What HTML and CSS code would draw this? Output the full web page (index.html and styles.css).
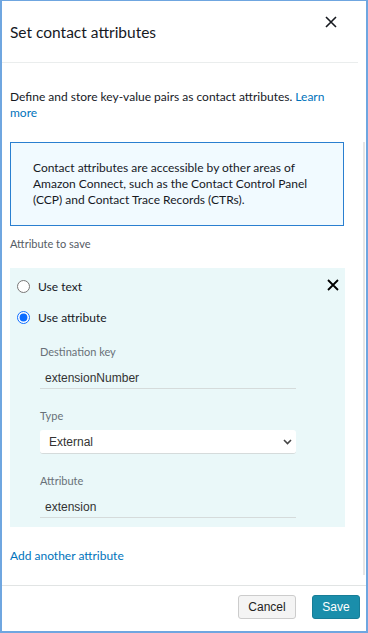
FILE: index.html
```html
<!DOCTYPE html>
<html lang="en">
<head>
    <meta charset="UTF-8" />
    <title>Set contact attributes</title>
    <link rel="stylesheet" href="styles.css">
</head>
<body>
<div class="frame">
    <div class="header">
        <h1>Set contact attributes</h1>
        <button class="close" type="button" aria-label="Close">
            <svg width="12" height="12" viewBox="0 0 12 12"><path d="M1 1 L11 11 M11 1 L1 11" stroke="#16191f" stroke-width="1.6"/></svg>
        </button>
    </div>

    <div class="body">
        <div class="content">
            <p class="intro">Define and store key-value pairs as contact attributes. <a href="#">Learn more</a></p>

            <div class="info">
                Contact attributes are accessible by other areas of Amazon Connect, such as the Contact Control Panel (CCP) and Contact Trace Records (CTRs).
            </div>

            <div class="section-label">Attribute to save</div>

            <div class="panel">
                <div class="radios">
                    <label class="radio"><input type="radio" name="mode"> Use text</label>
                    <label class="radio"><input type="radio" name="mode" checked> Use attribute</label>
                </div>
                <button class="remove" type="button" aria-label="Remove">
                    <svg width="12" height="12" viewBox="0 0 12 12"><path d="M1 1 L11 11 M11 1 L1 11" stroke="#000" stroke-width="1.8"/></svg>
                </button>

                <div class="fields">
                    <div class="field">
                        <label>Destination key</label>
                        <div class="value">extensionNumber</div>
                    </div>
                    <div class="field field-select">
                        <label>Type</label>
                        <div class="select">
                            <span>External</span>
                            <svg width="9" height="6" viewBox="0 0 9 6"><path d="M1 1 L4.5 4.5 L8 1" stroke="#444" stroke-width="1.6" fill="none"/></svg>
                        </div>
                    </div>
                    <div class="field">
                        <label>Attribute</label>
                        <div class="value">extension</div>
                    </div>
                </div>
            </div>

            <a class="add" href="#">Add another attribute</a>
        </div>
        <div class="scrollbar"></div>
    </div>

    <div class="footer">
        <button class="btn cancel" type="button">Cancel</button>
        <button class="btn save" type="button">Save</button>
    </div>
</div>
</body>
</html>
```

FILE: styles.css
```css
* {
    box-sizing: border-box;
}
body {
    margin: 0;
    font-family: Lato, 'Open Sans', sans-serif;
    color: #16191f;
    background: #fff;
}
.frame {
    width: 368px;
    height: 633px;
    border: 2px solid #6fa6e0;
    border-top-width: 1px;
    display: flex;
    flex-direction: column;
    background: #fff;
}
.header {
    display: flex;
    align-items: flex-start;
    justify-content: space-between;
    padding: 21px 21px 0 8px;
    height: 62px;
    margin-right: 8px;
    border-bottom: 1px solid #eaeded;
}
h1 {
    margin: 0;
    font-size: 15.5px;
    line-height: 20px;
    font-weight: 400;
}
.close, .remove {
    background: none;
    border: none;
    padding: 0;
    cursor: pointer;
    line-height: 0;
}
.close {
    margin-top: -6px;
}
.body {
    flex: 1;
    display: flex;
    min-height: 0;
}
.content {
    flex: 1;
    padding: 26px 0 0 8px;
}
.scrollbar {
    width: 2px;
    margin: 79px 1px 10px 0;
    background: #e6e6e6;
}
.intro {
    margin: 0;
    font-size: 12px;
    line-height: 16px;
    padding-right: 14px;
}
a {
    color: #0073bb;
    text-decoration: none;
}
.info {
    margin: 21px 19px 0 0;
    border: 1px solid #2a7fd0;
    background: #f1faff;
    font-size: 12px;
    line-height: 16px;
    padding: 17px 20px 16px 22px;
    height: 84px;
}
.section-label {
    margin-top: 11px;
    font-size: 11px;
    color: #545b64;
}
.panel {
    position: relative;
    margin: 18px 18px 0 0;
    background: #eaf8f9;
    padding: 9px 0 9px 6px;
}
.radios {
    display: flex;
    flex-direction: column;
    gap: 12px;
}
.radio {
    display: flex;
    align-items: center;
    font-size: 12px;
    height: 19px;
}
.radio input {
    margin: 0 8px 0 1px;
    width: 13px;
    height: 13px;
    accent-color: #0a6cff;
}
.remove {
    position: absolute;
    top: 11px;
    right: 6px;
}
.fields {
    padding: 18px 0 0 24px;
    display: flex;
    flex-direction: column;
    gap: 20px;
    width: 280px;
}
.field label {
    display: block;
    font-size: 11px;
    color: #687078;
    margin-bottom: 13px;
}
.field-select label {
    margin-bottom: 8px;
}
.value {
    font-family: 'Liberation Sans', Arial, sans-serif;
    font-size: 12px;
    color: #333;
    padding: 0 0 3px 5px;
    border-bottom: 1px solid #d5dbdb;
}
.select {
    display: flex;
    align-items: center;
    justify-content: space-between;
    height: 24px;
    background: #fff;
    border-radius: 3px;
    border-bottom: 1px solid #d5dbdb;
    padding: 0 4px 0 9px;
    font-family: 'Liberation Sans', Arial, sans-serif;
    font-size: 12px;
    color: #333;
}
.add {
    display: block;
    margin-top: 21px;
    font-size: 12px;
}
.footer {
    height: 46px;
    border-top: 1px solid #e1e4e4;
    display: flex;
    justify-content: flex-end;
    align-items: center;
    gap: 16px;
    padding: 0 6px 4px 0;
}
.btn {
    height: 24px;
    border-radius: 3px;
    font-family: 'Liberation Sans', Arial, sans-serif;
    font-size: 12px;
    cursor: pointer;
}
.cancel {
    width: 58px;
    background: #f4f4f4;
    border: 1px solid #ccc;
    color: #222;
}
.save {
    width: 48px;
    background: #1a8eab;
    border: 1px solid #177d97;
    color: #fff;
}
```
